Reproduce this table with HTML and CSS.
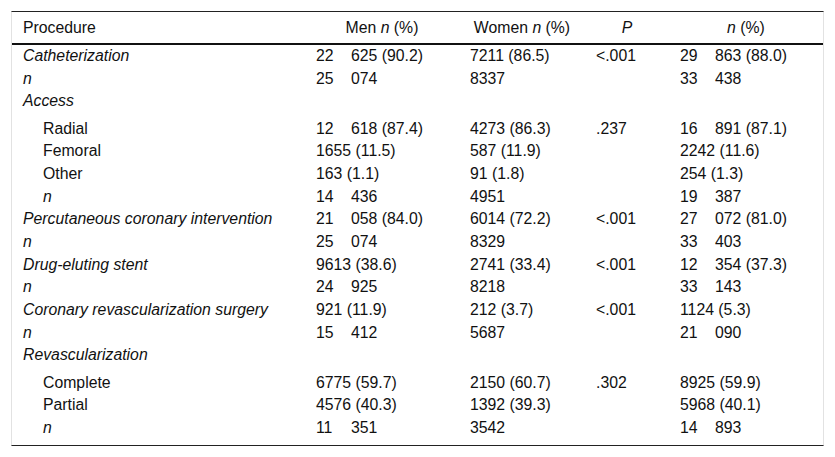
FILE: index.html
```html
<!DOCTYPE html>
<html lang="en">
<head>
<meta charset="utf-8">
<title>Procedures by sex</title>
<link rel="stylesheet" href="styles.css">
</head>
<body>
<div class="frame">
<table class="tbl">
<colgroup>
<col class="c1"><col class="c2"><col class="c3"><col class="c4"><col class="c5">
</colgroup>
<thead>
<tr>
<th class="left">Procedure</th>
<th>Men <i>n</i> (%)</th>
<th>Women <i>n</i> (%)</th>
<th><i>P</i></th>
<th><i>n</i> (%)</th>
</tr>
</thead>
<tbody>
<tr><td><i>Catheterization</i></td><td><span class="k">22</span>625 (90.2)</td><td>7211 (86.5)</td><td>&lt;.001</td><td><span class="k">29</span>863 (88.0)</td></tr>
<tr><td><i>n</i></td><td><span class="k">25</span>074</td><td>8337</td><td></td><td><span class="k">33</span>438</td></tr>
<tr class="grp"><td><i>Access</i></td><td></td><td></td><td></td><td></td></tr>
<tr><td class="ind">Radial</td><td><span class="k">12</span>618 (87.4)</td><td>4273 (86.3)</td><td>.237</td><td><span class="k">16</span>891 (87.1)</td></tr>
<tr><td class="ind">Femoral</td><td>1655 (11.5)</td><td>587 (11.9)</td><td></td><td>2242 (11.6)</td></tr>
<tr><td class="ind">Other</td><td>163 (1.1)</td><td>91 (1.8)</td><td></td><td>254 (1.3)</td></tr>
<tr><td class="ind"><i>n</i></td><td><span class="k">14</span>436</td><td>4951</td><td></td><td><span class="k">19</span>387</td></tr>
<tr><td><i>Percutaneous coronary intervention</i></td><td><span class="k">21</span>058 (84.0)</td><td>6014 (72.2)</td><td>&lt;.001</td><td><span class="k">27</span>072 (81.0)</td></tr>
<tr><td><i>n</i></td><td><span class="k">25</span>074</td><td>8329</td><td></td><td><span class="k">33</span>403</td></tr>
<tr><td><i>Drug-eluting stent</i></td><td>9613 (38.6)</td><td>2741 (33.4)</td><td>&lt;.001</td><td><span class="k">12</span>354 (37.3)</td></tr>
<tr><td><i>n</i></td><td><span class="k">24</span>925</td><td>8218</td><td></td><td><span class="k">33</span>143</td></tr>
<tr><td><i>Coronary revascularization surgery</i></td><td>921 (11.9)</td><td>212 (3.7)</td><td>&lt;.001</td><td>1124 (5.3)</td></tr>
<tr><td><i>n</i></td><td><span class="k">15</span>412</td><td>5687</td><td></td><td><span class="k">21</span>090</td></tr>
<tr class="grp"><td><i>Revascularization</i></td><td></td><td></td><td></td><td></td></tr>
<tr><td class="ind">Complete</td><td>6775 (59.7)</td><td>2150 (60.7)</td><td>.302</td><td>8925 (59.9)</td></tr>
<tr><td class="ind">Partial</td><td>4576 (40.3)</td><td>1392 (39.3)</td><td></td><td>5968 (40.1)</td></tr>
<tr class="last"><td class="ind"><i>n</i></td><td><span class="k">11</span>351</td><td>3542</td><td></td><td><span class="k">14</span>893</td></tr>
</tbody>
</table>
</div>
</body>
</html>
```
FILE: styles.css
```css
html, body {
  margin: 0;
  padding: 0;
  background: #fff;
}
body {
  font-family: "Liberation Sans", Arial, sans-serif;
  font-size: 15.8px;
  color: #111;
}
.frame {
  margin: 11px 11px 0 11px;
  border-top: 1px solid #222;
  border-bottom: 1px solid #222;
  border-left: 1px solid #e2e2e2;
  border-right: 1px solid #e2e2e2;
}
.tbl {
  width: 100%;
  border-collapse: collapse;
  table-layout: fixed;
}
.c1 { width: 293px; }
.c2 { width: 154px; }
.c3 { width: 126px; }
.c4 { width: 84px; }
.c5 { width: auto; }
.tbl th {
  font-weight: normal;
  text-align: center;
  padding: 7px 11px 6px 11px;
  line-height: 18px;
  border-bottom: 2px solid #111;
}
.tbl th.left { text-align: left; }
.tbl td {
  text-align: left;
  padding: 2px 11px 2.7px 11px;
  line-height: 18px;
  white-space: nowrap;
  vertical-align: top;
}
.tbl tr.grp td { padding-bottom: 7.2px; }
.tbl td.ind { padding-left: 31px; }
.tbl tr.last td { padding-bottom: 8px; }
.k {
  display: inline-block;
  width: 35px;
}
```
